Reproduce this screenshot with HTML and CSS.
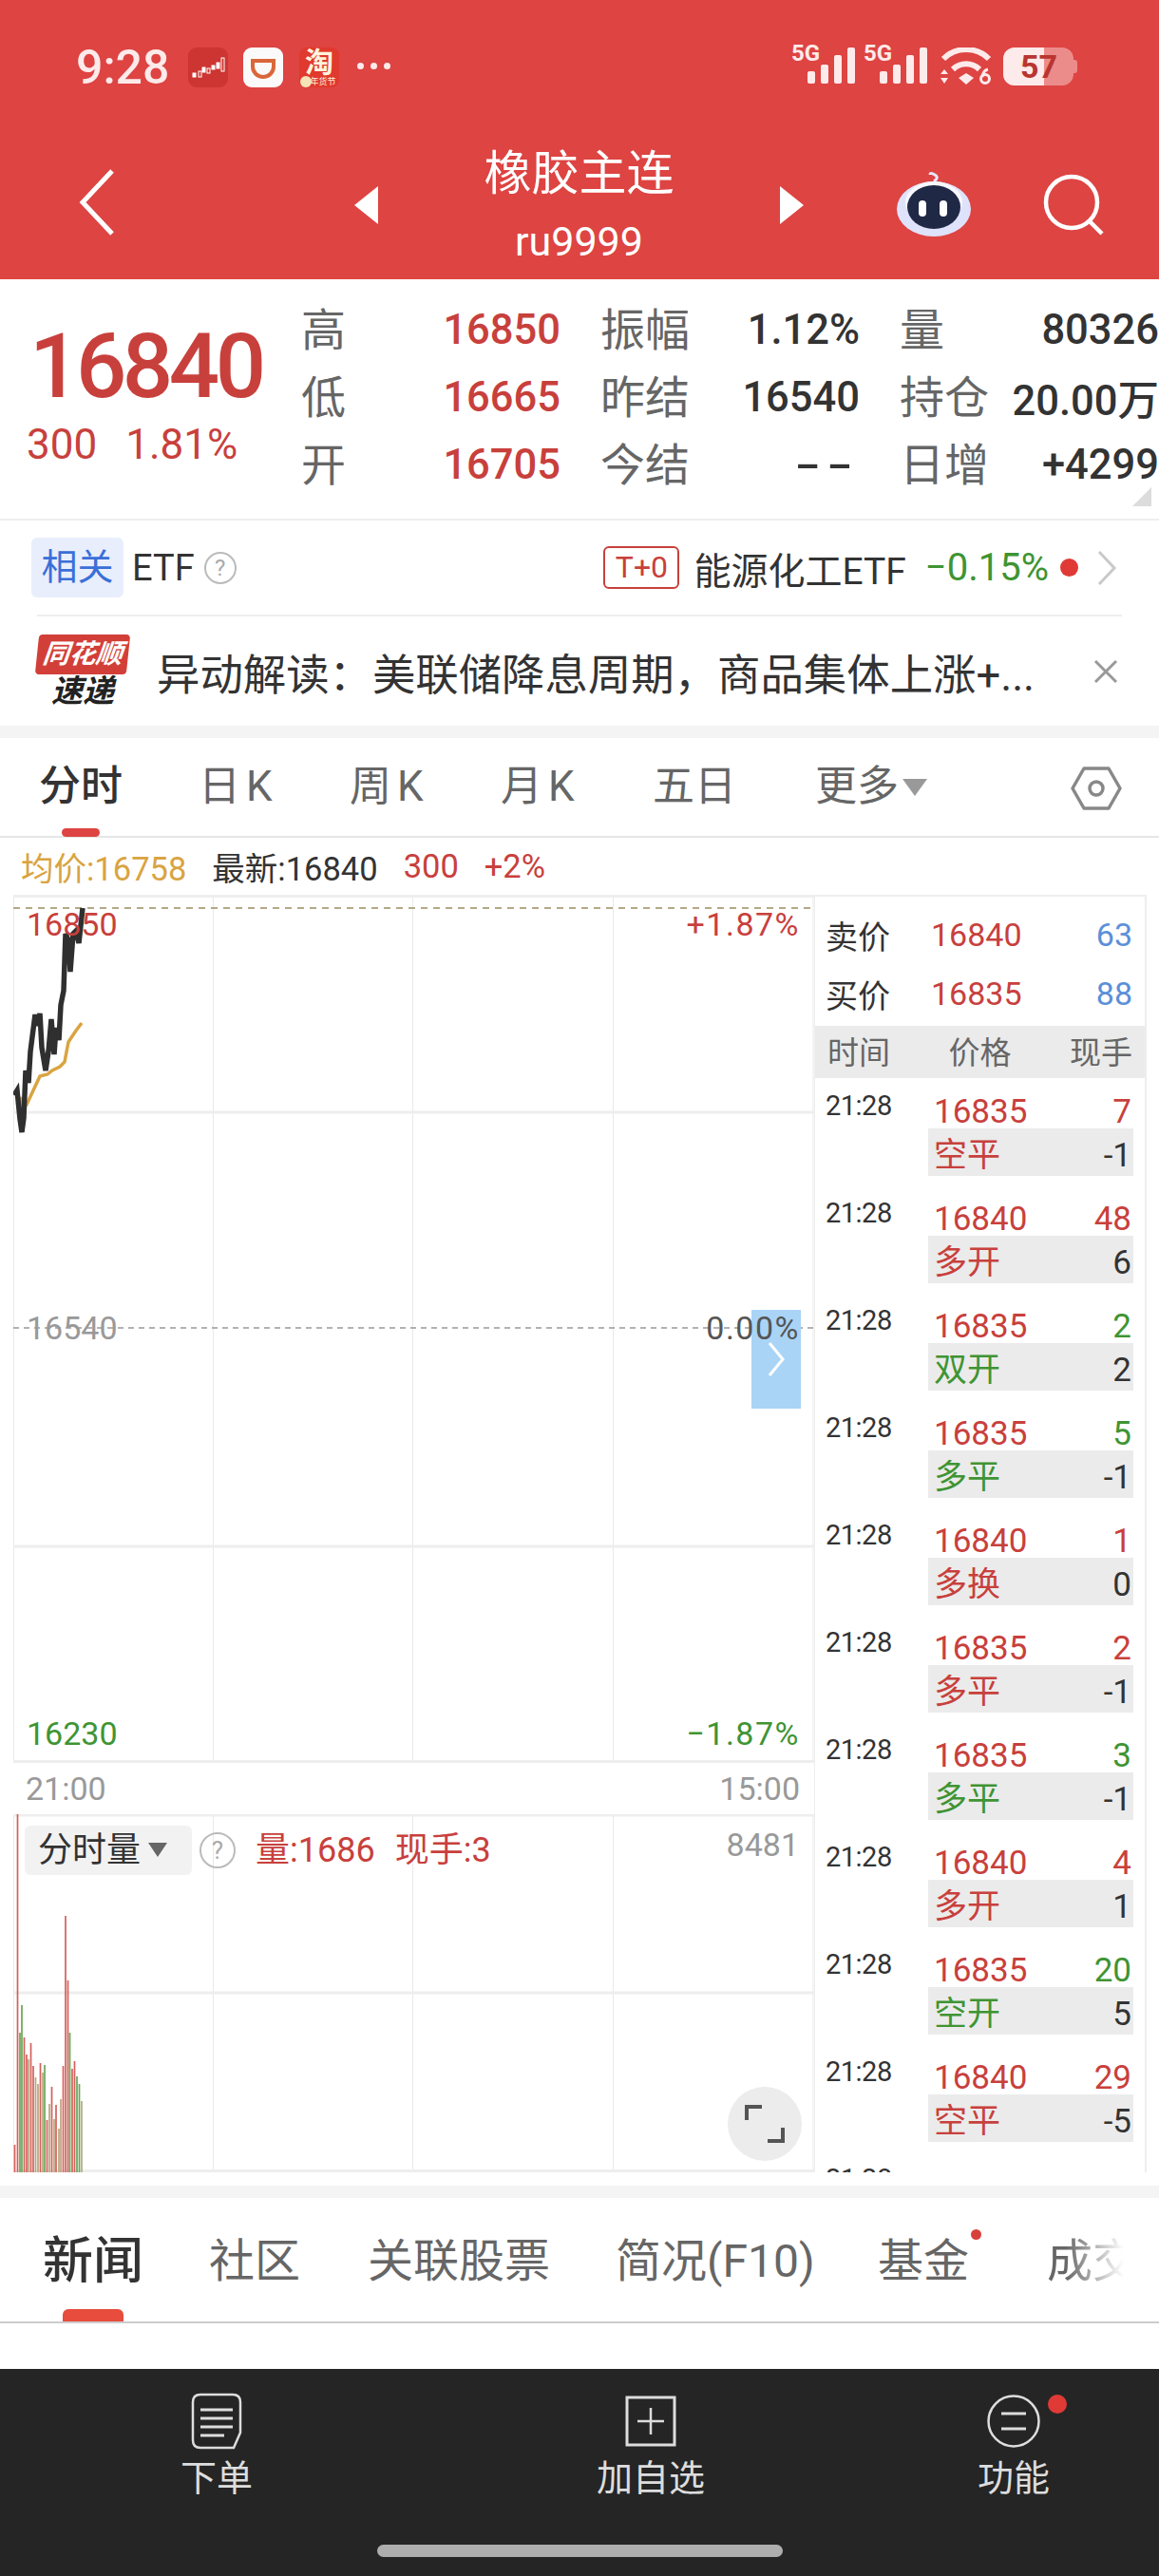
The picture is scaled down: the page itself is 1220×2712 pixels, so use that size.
FILE: index.html
```html
<!DOCTYPE html>
<html lang="zh-CN">
<head>
    <meta charset="UTF-8" />
    <meta name="viewport" content="width=device-width, initial-scale=1.0" />
    <title>橡胶主连</title>
    <link rel="stylesheet" href="styles.css">
</head>
<body>

<header class="top">
    <div class="status">
        <span class="clock">9:28</span>
        <svg class="app-icon" viewBox="0 0 42 42">
            <rect width="42" height="42" rx="9" fill="#cc3531"/>
            <g fill="#fff" stroke="#fff" stroke-width="1">
                <rect x="5" y="27" width="3" height="4"/><rect x="11" y="25" width="3" height="6" fill="none"/>
                <rect x="15" y="21" width="3" height="5"/><rect x="20" y="22" width="3" height="5" fill="none"/>
                <rect x="25" y="19" width="3" height="4"/><rect x="30" y="16" width="3" height="6"/>
                <rect x="35" y="11" width="3" height="14" fill="none"/>
            </g>
        </svg>
        <svg class="app-icon didi" viewBox="0 0 42 42">
            <rect width="42" height="42" rx="9" fill="#fbfafa"/>
            <path d="M10 14h22v6a11 11 0 0 1-22 0z" fill="none" stroke="#d9673a" stroke-width="4"/>
        </svg>
        <span class="taobao"><b>淘</b><i>年货节</i></span>
        <span class="more-dots"><i></i><i></i><i></i></span>
        <span class="sys-icons">
            <span class="signal"><b>5G</b>
                <svg viewBox="0 0 50 38" width="50" height="38"><g fill="#fdeaea"><rect x="0" y="25" width="8" height="13" rx="2"/><rect x="14" y="18" width="8" height="20" rx="2"/><rect x="28" y="8" width="8" height="30" rx="2"/><rect x="42" y="0" width="8" height="38" rx="2"/></g></svg>
            </span>
            <span class="signal"><b>5G</b>
                <svg viewBox="0 0 50 38" width="50" height="38"><g fill="#fdeaea"><rect x="0" y="25" width="8" height="13" rx="2"/><rect x="14" y="18" width="8" height="20" rx="2"/><rect x="28" y="8" width="8" height="30" rx="2"/><rect x="42" y="0" width="8" height="38" rx="2"/></g></svg>
            </span>
            <svg class="wifi" viewBox="0 0 54 40" width="54" height="40">
                <path d="M3 12a34 34 0 0 1 48 0" fill="none" stroke="#fdeaea" stroke-width="6"/>
                <path d="M13 23a20 20 0 0 1 28 0" fill="none" stroke="#fdeaea" stroke-width="6"/>
                <path d="M19 32l8-5 8 5-8 7z" fill="#fdeaea"/>
                <path d="M0 28l4-5 4 5zM0 32h8l-4 6z" fill="#fdeaea"/>
                <circle cx="47" cy="33" r="4.5" fill="none" stroke="#fdeaea" stroke-width="3"/>
                <path d="M44 31q1-7 6-8" fill="none" stroke="#fdeaea" stroke-width="3"/>
            </svg>
            <span class="battery"><span class="battery-fill"></span><b>57</b></span>
        </span>
    </div>
    <div class="nav">
        <svg class="back" viewBox="0 0 40 70" width="40" height="70"><path d="M36 2L5 35l31 33" fill="none" stroke="#fff" stroke-width="5"/></svg>
        <div class="title-row">
            <span class="tri tri-left"></span>
            <div class="title"><h1>橡胶主连</h1><p>ru9999</p></div>
            <span class="tri tri-right"></span>
        </div>
        <svg class="robot" viewBox="0 0 78 72" width="78" height="72">
            <path d="M39 14q6-4 1-7t-5 0" fill="none" stroke="#e8e6ff" stroke-width="3"/>
            <ellipse cx="39" cy="43" rx="39" ry="29" fill="#dfe2fb"/>
            <ellipse cx="39" cy="36" rx="30" ry="22" fill="#f7f7ff"/>
            <ellipse cx="39" cy="41" rx="28" ry="23" fill="#1f2844"/>
            <rect x="23" y="34" width="8" height="17" rx="4" fill="#fff"/>
            <rect x="45" y="34" width="8" height="17" rx="4" fill="#fff"/>
        </svg>
        <svg class="search" viewBox="0 0 66 66" width="66" height="66"><circle cx="31" cy="30" r="27" fill="none" stroke="#fff" stroke-width="4.5"/><path d="M50 50l13 13" stroke="#fff" stroke-width="4.5"/></svg>
    </div>
</header>

<section class="quote">
    <div class="price">
        <div class="last">16840</div>
        <div class="change"><span>300</span><span>1.81%</span></div>
    </div>
    <div class="stats">
        <div class="stat"><label>高</label><span class="up">16850</span></div>
        <div class="stat"><label>振幅</label><span>1.12%</span></div>
        <div class="stat"><label>量</label><span>80326</span></div>
        <div class="stat"><label>低</label><span class="up">16665</span></div>
        <div class="stat"><label>昨结</label><span>16540</span></div>
        <div class="stat"><label>持仓</label><span>20.00万</span></div>
        <div class="stat"><label>开</label><span class="up">16705</span></div>
        <div class="stat"><label>今结</label><span class="dash">--</span></div>
        <div class="stat"><label>日增</label><span>+4299</span></div>
    </div>
    <span class="corner"></span>
</section>

<section class="etf">
    <span class="chip">相关</span>
    <span class="etf-name">ETF</span>
    <span class="help">?</span>
    <span class="etf-right">
        <span class="tplus">T+0</span>
        <span class="etf-fund">能源化工ETF</span>
        <span class="etf-pct">−0.15%</span>
        <span class="red-dot"></span>
        <svg viewBox="0 0 22 38" width="22" height="38"><path d="M3 2l16 17L3 36" fill="none" stroke="#c9c9c9" stroke-width="3"/></svg>
    </span>
</section>

<section class="news">
    <div class="news-logo"><span class="news-logo-top">同花顺</span><span class="news-logo-bottom">速递</span></div>
    <p>异动解读：美联储降息周期，商品集体上涨+...</p>
    <svg viewBox="0 0 26 26" width="26" height="26"><path d="M2 2l22 22M24 2L2 24" stroke="#999" stroke-width="3"/></svg>
</section>

<nav class="periods">
    <a class="active">分时</a>
    <a class="wide">日K</a>
    <a class="wide">周K</a>
    <a class="wide">月K</a>
    <a>五日</a>
    <a class="more">更多<i></i></a>
    <svg class="hex" viewBox="0 0 54 48" width="54" height="48"><path d="M14 3h26l12 21-12 21H14L2 24z" fill="none" stroke="#888" stroke-width="3.5" stroke-linejoin="round"/><circle cx="27" cy="24" r="7" fill="none" stroke="#888" stroke-width="3.5"/></svg>
</nav>

<div class="legend">
    <span class="avg">均价:16758</span>
    <span>最新:16840</span>
    <span class="up">300</span>
    <span class="up">+2%</span>
</div>

<section class="board">
    <div class="charts">
        <div class="plot price-plot">
            <svg viewBox="14 942 843 914" width="843" height="914">
                <g stroke="#e9e9e9" stroke-width="1" fill="none">
                    <path d="M14.5 942V1856M224.5 942V1856M434.5 942V1856M645.5 942V1856M856 942V1856"/>
                </g>
                <g stroke="#eee" stroke-width="3" fill="none">
                    <path d="M14 943.5H857M14 1171H857M14 1628H857M14 1854.5H857"/>
                </g>
                <path d="M14 956H857" stroke="#b5a888" stroke-width="2" stroke-dasharray="7 6"/>
                <path d="M14 1398H857" stroke="#999" stroke-width="1.5" stroke-dasharray="6 5"/>
                <path d="M21 1155L24 1167L28 1163L42 1133L50 1131L55 1127L63 1123L68 1118L72 1097L80 1085L86 1077" fill="none" stroke="#d9a441" stroke-width="3.5"/>
                <path d="M15 1153L18 1148L21 1178L23 1192L25 1177L27 1127L30 1140L32 1107L37 1068L39 1080L42 1067L44 1103L48 1127L51 1107L54 1073L57 1110L59 1082L62 1095L64 1058L67 1043L69 983L72 990L74 1023L77 983L80 980L83 993L87 956" fill="none" stroke="#2f2f2f" stroke-width="5.5"/>
            </svg>
            <span class="expand"><svg viewBox="0 0 20 40" width="20" height="40"><path d="M3 3l14 17L3 37" fill="none" stroke="#fff" stroke-width="3"/></svg></span>
            <span class="mark left top-mark up">16850</span>
            <span class="mark right top-mark up">+1.87%</span>
            <span class="mark left mid-mark grey">16540</span>
            <span class="mark right mid-mark zero">0.00%</span>
            <span class="mark left low-mark down">16230</span>
            <span class="mark right low-mark down">−1.87%</span>
        </div>
        <div class="axis"><span>21:00</span><span>15:00</span></div>
        <div class="plot vol-plot">
            <svg viewBox="14 1910 843 377" width="843" height="377">
                <path d="M14.5 1910V2287M224.5 1910V2287M434.5 1910V2287M645.5 1910V2287M856 1910V2287" stroke="#e9e9e9" stroke-width="1" fill="none"/>
                <path d="M14 1911H857M14 2098H857M14 2285.5H857" stroke="#eee" stroke-width="3" fill="none"/>
                <g stroke-width="1.7" fill="none">
                    <path stroke="#d5605c" d="M15.5 2258V2287M18.5 1910V2287M25.5 2145V2287M28 2163V2287M32.5 2151V2287M35 2175V2287M42.5 2172V2287M49.5 2232V2287M54.5 2197V2287M59 2216V2287M66.5 2175V2287M69 2017V2287M71.5 2085V2287M76 2178V2287M78.5 2170V2287"/>
                    <path stroke="#69a657" d="M21 2140V2287M23 2111V2287M47 2174V2287M73.5 2140V2287M81 2186V2287M83.5 2194V2287"/>
                    <path stroke="#b9a67e" d="M30 2168V2287M37.5 2187V2287M40 2194V2287M45 2182V2287M52 2215V2287M57 2231V2287M62 2241V2287M64 2210V2287M86 2212V2287"/>
                </g>
            </svg>
            <div class="vol-head">
                <span class="vol-chip">分时量<i></i></span>
                <span class="help vol-help">?</span>
                <span class="up">量:1686</span>
                <span class="up">现手:3</span>
            </div>
            <span class="vol-max">8481</span>
            <span class="fullscreen"><svg viewBox="0 0 42 42" width="42" height="42"><path d="M2 17V3h16M40 25v14H24" fill="none" stroke="#555" stroke-width="4"/></svg></span>
        </div>
    </div>

    <aside class="ticks">
        <div class="book"><label>卖价</label><span class="up">16840</span><em>63</em></div>
        <div class="book"><label>买价</label><span class="up">16835</span><em>88</em></div>
        <div class="tick-head"><span>时间</span><span>价格</span><span>现手</span></div>

        <div class="tick"><time>21:28</time><div><p class="up"><span>16835</span><span>7</span></p><p class="sub"><span class="up">空平</span><span>-1</span></p></div></div>
        <div class="tick"><time>21:28</time><div><p class="up"><span>16840</span><span>48</span></p><p class="sub"><span class="up">多开</span><span>6</span></p></div></div>
        <div class="tick"><time>21:28</time><div><p class="up"><span>16835</span><span class="down">2</span></p><p class="sub"><span class="down">双开</span><span>2</span></p></div></div>
        <div class="tick"><time>21:28</time><div><p class="up"><span>16835</span><span class="down">5</span></p><p class="sub"><span class="down">多平</span><span>-1</span></p></div></div>
        <div class="tick"><time>21:28</time><div><p class="up"><span>16840</span><span>1</span></p><p class="sub"><span class="up">多换</span><span>0</span></p></div></div>
        <div class="tick"><time>21:28</time><div><p class="up"><span>16835</span><span>2</span></p><p class="sub"><span class="up">多平</span><span>-1</span></p></div></div>
        <div class="tick"><time>21:28</time><div><p class="up"><span>16835</span><span class="down">3</span></p><p class="sub"><span class="down">多平</span><span>-1</span></p></div></div>
        <div class="tick"><time>21:28</time><div><p class="up"><span>16840</span><span>4</span></p><p class="sub"><span class="up">多开</span><span>1</span></p></div></div>
        <div class="tick"><time>21:28</time><div><p class="up"><span>16835</span><span class="down">20</span></p><p class="sub"><span class="down">空开</span><span>5</span></p></div></div>
        <div class="tick"><time>21:28</time><div><p class="up"><span>16840</span><span>29</span></p><p class="sub"><span class="up">空平</span><span>-5</span></p></div></div>
        <div class="tick"><time>21:28</time><div><p class="up"><span>16840</span><span>7</span></p><p class="sub"><span class="up">多开</span><span>1</span></p></div></div>
    </aside>
</section>

<div class="band"></div>

<nav class="subtabs">
    <a class="active">新闻</a>
    <a>社区</a>
    <a>关联股票</a>
    <a>简况(F10)</a>
    <a class="dotted">基金</a>
    <a class="fade">成交明细</a>
</nav>

<div class="spacer"></div>

<footer class="bottom">
    <div class="actions">
        <a>
            <svg viewBox="0 0 54 60" width="54" height="60"><path d="M10 2h34q8 0 8 8v32l-7 16H10q-8 0-8-8V10q0-8 8-8z" fill="none" stroke="#ddd" stroke-width="2.5"/><path d="M10 18h34M10 27h34M10 36h34M10 45h25" stroke="#ddd" stroke-width="3"/></svg>
            下单
        </a>
        <a>
            <svg viewBox="0 0 54 54" width="54" height="54"><path d="M2 2h50v50H2z" fill="none" stroke="#ddd" stroke-width="3"/><path d="M27 13v28M13 27h28" stroke="#ddd" stroke-width="2.5"/></svg>
            加自选
        </a>
        <a class="func">
            <svg viewBox="0 0 56 56" width="56" height="56"><circle cx="28" cy="28" r="26.5" fill="none" stroke="#ddd" stroke-width="2.5"/><path d="M15 20h26M15 36h26" stroke="#ddd" stroke-width="3"/></svg>
            功能
            <span class="func-dot"></span>
        </a>
    </div>
    <div class="home-bar"></div>
</footer>

</body>
</html>
```

FILE: styles.css
```css
* {
    box-sizing: border-box;
}

body {
    margin: 0;
    width: 1220px;
    height: 2712px;
    overflow: hidden;
    background: white;
    color: #333;
    font-family: Roboto, "Noto Sans CJK SC", sans-serif;
}

h1, p {
    margin: 0;
    font-weight: normal;
}

label {
    color: #666;
}

.up {
    color: #c8403c;
}

.down {
    color: #3f9433;
}

.grey {
    color: #999;
}

/* header */
.top {
    height: 294px;
    background: #dd4442;
    color: white;
}

.status {
    height: 140px;
    padding: 50px 0 0 80px;
    display: flex;
    align-items: flex-start;
}

.clock {
    width: 118px;
    font-size: 50px;
    font-weight: 500;
    line-height: 42px;
    color: #fdeaea;
}

.app-icon {
    width: 42px;
    height: 42px;
}

.didi {
    margin-left: 16px;
}

.taobao {
    position: relative;
    width: 42px;
    height: 42px;
    margin-left: 17px;
    border-radius: 8px;
    background: #e0392e;
    text-align: center;
}

.taobao::after {
    content: "";
    position: absolute;
    left: 1px;
    bottom: 0;
    width: 12px;
    height: 12px;
    border-radius: 50%;
    background: #f6e3b8;
}

.taobao b {
    display: block;
    font-size: 30px;
    line-height: 31px;
    color: #fff3dc;
}

.taobao i {
    display: block;
    padding-left: 8px;
    font-size: 9px;
    font-style: normal;
    line-height: 11px;
    color: #fff3dc;
}

.more-dots {
    display: flex;
    gap: 7px;
    margin: 16px 0 0 19px;
}

.more-dots i {
    width: 7px;
    height: 7px;
    border-radius: 50%;
    background: #fdeaea;
}

.sys-icons {
    display: flex;
    align-items: flex-start;
    margin-left: 422px;
}

.signal {
    display: flex;
    width: 76px;
    height: 40px;
}

.signal b {
    width: 17px;
    margin-top: -6px;
    font-size: 24px;
    line-height: 24px;
    color: #fdeaea;
    white-space: nowrap;
}

.wifi {
    margin-left: 5px;
}

.battery {
    position: relative;
    width: 74px;
    height: 40px;
    margin-left: 12px;
    border-radius: 12px;
    background: #ec8c8a;
}

.battery::after {
    content: "";
    position: absolute;
    left: 74px;
    top: 13px;
    width: 4px;
    height: 14px;
    background: #ec8c8a;
    border-radius: 0 3px 3px 0;
}

.battery-fill {
    position: absolute;
    left: 0;
    top: 0;
    width: 43px;
    height: 40px;
    border-radius: 12px 0 0 12px;
    background: #fdeaea;
}

.battery b {
    position: absolute;
    left: 18px;
    top: 0;
    font-size: 34px;
    line-height: 40px;
    color: #b9352f;
}

.nav {
    height: 154px;
    position: relative;
    display: flex;
    padding: 38px 0 0 82px;
}

.title-row {
    display: flex;
    align-items: center;
    justify-content: space-between;
    width: 473px;
    height: 132px;
    margin: -28px 0 0 251px;
    position: absolute;
    left: 122px;
}

.tri {
    width: 0;
    height: 0;
    border-top: 20px solid transparent;
    border-bottom: 20px solid transparent;
}

.tri-left {
    border-right: 25px solid white;
}

.tri-right {
    border-left: 25px solid white;
}

.title {
    text-align: center;
}

.title h1 {
    padding-top: 3px;
    font-size: 50px;
    line-height: 66px;
}

.title p {
    margin-top: 7px;
    font-size: 43px;
    line-height: 62px;
}

.robot {
    position: absolute;
    left: 944px;
    top: 37px;
}

.search {
    position: absolute;
    left: 1097px;
    top: 43px;
}

/* quote */
.quote {
    position: relative;
    height: 254px;
    display: flex;
    border-bottom: 2px solid #eeeeee;
}

.price {
    width: 317px;
    padding: 47px 0 0 31px;
    color: #c8403c;
}

.last {
    font-size: 94px;
    font-weight: 500;
    line-height: 90px;
    letter-spacing: -4.5px;
}

.change {
    display: flex;
    gap: 30px;
    margin: 14px 0 0 -3px;
    font-size: 44px;
    line-height: 46px;
}

.stats {
    width: 903px;
    padding-top: 18px;
    display: grid;
    grid-template-columns: 273px 273px 273px;
    column-gap: 42px;
    grid-auto-rows: 71px;
}

.stat {
    display: flex;
    justify-content: space-between;
    align-items: center;
    font-size: 47px;
    white-space: nowrap;
}

.stat label {
    margin-bottom: 8px;
}

.stat span {
    font-size: 43.5px;
    font-weight: 500;
}

.stat .dash {
    letter-spacing: 4px;
    transform: scaleX(1.8);
    transform-origin: right center;
}

.corner {
    position: absolute;
    right: 8px;
    top: 219px;
    border-left: 20px solid transparent;
    border-bottom: 20px solid #dcdcdc;
}

/* etf row */
.etf {
    height: 99px;
    display: flex;
    align-items: center;
    padding: 0 0 0 33px;
}

.chip {
    width: 97px;
    height: 63px;
    border-radius: 6px;
    background: #e8eefc;
    color: #3b6fd8;
    font-size: 38px;
    line-height: 63px;
    text-align: center;
}

.etf-name {
    margin-left: 9px;
    font-size: 38px;
}

.help {
    display: inline-block;
    width: 34px;
    height: 34px;
    margin-left: 10px;
    border: 2px solid #bbb;
    border-radius: 50%;
    color: #aaa;
    font-size: 24px;
    line-height: 30px;
    text-align: center;
}

.etf-right {
    margin-left: auto;
    padding-right: 44px;
    display: flex;
    align-items: center;
}

.tplus {
    width: 80px;
    height: 45px;
    border: 2px solid #c8403c;
    border-radius: 6px;
    color: #c8403c;
    font-size: 32px;
    line-height: 41px;
    text-align: center;
}

.etf-fund {
    margin-left: 15px;
    font-size: 39px;
}

.etf-pct {
    margin-left: 20px;
    color: #3f9433;
    font-size: 40px;
}

.red-dot {
    width: 19px;
    height: 19px;
    margin: 0 19px 0 12px;
    border-radius: 50%;
    background: #e03a36;
}

/* news */
.news {
    height: 117px;
    margin: 0 39px;
    border-top: 2px solid #eeeeee;
    display: flex;
    align-items: center;
}

.news-logo {
    width: 96px;
    height: 78px;
    text-align: center;
    font-style: italic;
    font-weight: bold;
}

.news-logo-top {
    display: block;
    height: 42px;
    border-radius: 4px;
    background: #d23f38;
    color: white;
    font-size: 28px;
    line-height: 42px;
    transform: skewX(-6deg);
}

.news-logo-bottom {
    display: block;
    font-size: 33px;
    line-height: 36px;
    color: #222;
}

.news p {
    margin-left: 30px;
    width: 955px;
    font-size: 45.4px;
    white-space: nowrap;
}

.news svg {
    margin-left: 31px;
}

/* period tabs */
.periods {
    height: 118px;
    border-top: 13px solid #f4f4f4;
    border-bottom: 2px solid #e6e6e6;
    position: relative;
    font-size: 44px;
    color: #666;
}

.periods a {
    position: absolute;
    top: 26px;
    line-height: 50px;
}

.periods a:nth-child(1) { left: 41px; color: #333; font-weight: 500; }
.periods a:nth-child(2) { left: 209px; }
.periods a:nth-child(3) { left: 368px; }
.periods a:nth-child(4) { left: 527px; }
.periods a:nth-child(5) { left: 687px; }
.periods a:nth-child(6) { left: 858px; }

.periods .wide {
    letter-spacing: 6px;
}

.periods .active::after {
    content: "";
    position: absolute;
    left: 24px;
    top: 69px;
    width: 40px;
    height: 9px;
    border-radius: 5px;
    background: #dd4442;
}

.more i {
    display: inline-block;
    margin-left: 4px;
    vertical-align: 5px;
    border-top: 18px solid #999;
    border-left: 13px solid transparent;
    border-right: 13px solid transparent;
}

.hex {
    position: absolute;
    left: 1127px;
    top: 29px;
}

/* legend */
.legend {
    height: 60px;
    padding-left: 22px;
    display: flex;
    align-items: center;
    gap: 27px;
    font-size: 34.5px;
}

.avg {
    color: #d9a441;
}

/* board */
.board {
    height: 1345px;
    padding-left: 14px;
    display: flex;
}

.charts {
    width: 843px;
}

.plot {
    position: relative;
}

.plot > svg {
    display: block;
}

.price-plot {
    height: 914px;
}

.mark {
    position: absolute;
    font-size: 34px;
    line-height: 40px;
}

.mark.left {
    left: 14px;
}

.mark.right {
    right: 15px;
    letter-spacing: 1.5px;
}

.top-mark {
    top: 11px;
}

.mid-mark {
    top: 436px;
}

.low-mark {
    top: 863px;
}

.zero {
    color: #555;
}

.expand {
    position: absolute;
    left: 777px;
    top: 437px;
    width: 52px;
    height: 104px;
    background: #a9d4f6;
    display: flex;
    align-items: center;
    justify-content: center;
}

.axis {
    height: 54px;
    padding: 0 15px 0 13px;
    display: flex;
    align-items: center;
    justify-content: space-between;
    font-size: 34px;
    color: #999;
}

.vol-plot {
    height: 377px;
}

.vol-head {
    position: absolute;
    left: 12px;
    top: 12px;
    display: flex;
    align-items: center;
    font-size: 36px;
    line-height: 52px;
}

.vol-chip {
    width: 176px;
    height: 52px;
    padding-left: 14px;
    border-radius: 6px;
    background: #f2f2f2;
}

.vol-chip i {
    display: inline-block;
    margin-left: 8px;
    vertical-align: 5px;
    border-top: 15px solid #666;
    border-left: 10px solid transparent;
    border-right: 10px solid transparent;
}

.vol-help {
    width: 38px;
    height: 38px;
    margin: 0 0 0 8px;
    line-height: 34px;
    font-size: 26px;
}

.vol-head .up {
    margin-left: 21px;
}

.vol-max {
    position: absolute;
    right: 16px;
    top: 12px;
    font-size: 34px;
    line-height: 40px;
    color: #999;
}

.fullscreen {
    position: absolute;
    left: 752px;
    top: 287px;
    width: 78px;
    height: 78px;
    border-radius: 50%;
    background: #ececec;
    display: flex;
    align-items: center;
    justify-content: center;
}

/* tick list */
.ticks {
    width: 350px;
    height: 1345px;
    padding-top: 12px;
    overflow: hidden;
    border: 2px solid #eeeeee;
    border-left-width: 1px;
    border-bottom-width: 0;
}

.book {
    height: 62px;
    padding: 0 13px 6px 11px;
    display: grid;
    grid-template-columns: 111px 1fr auto;
    align-items: center;
    font-size: 34px;
}

.book label {
    color: #333;
}

.book em {
    font-style: normal;
    color: #5b8fd8;
}

.tick-head {
    height: 55px;
    padding: 0 13px 4px;
    display: flex;
    justify-content: space-between;
    align-items: center;
    background: #ebebeb;
    font-size: 33px;
    color: #666;
}

.tick {
    height: 113px;
    display: flex;
    padding: 11px 12px 0 11px;
    font-size: 35px;
}

.tick time {
    width: 108px;
    font-size: 29px;
    line-height: 36px;
    letter-spacing: -0.5px;
}

.tick div {
    width: 216px;
}

.tick p {
    height: 42px;
    display: flex;
    justify-content: space-between;
    padding: 4px 2px 0 6px;
    line-height: 42px;
}

.tick p.sub {
    height: 50px;
    padding-top: 8px;
    background: #ebebeb;
    color: #333;
}

.band {
    height: 13px;
    margin-top: 14px;
    background: #f4f4f4;
}

/* lower tabs */
.subtabs {
    position: relative;
    height: 132px;
    border-bottom: 2px solid #cccccc;
    overflow: hidden;
    font-size: 48px;
    color: #666;
}

.subtabs a {
    position: absolute;
    top: 34px;
    line-height: 66px;
    white-space: nowrap;
}

.subtabs a:nth-child(1) { left: 45px; font-size: 53px; font-weight: 500; color: #333; }
.subtabs a:nth-child(2) { left: 220px; }
.subtabs a:nth-child(3) { left: 387px; }
.subtabs a:nth-child(4) { left: 648px; }
.subtabs a:nth-child(5) { left: 924px; }
.subtabs a:nth-child(6) { left: 1102px; }

.subtabs .active::after {
    content: "";
    position: absolute;
    left: 21px;
    top: 83px;
    width: 64px;
    height: 13px;
    border-radius: 6px 6px 0 0;
    background: #e74c3c;
}

.subtabs .dotted::after {
    content: "";
    position: absolute;
    left: 98px;
    top: -1px;
    width: 11px;
    height: 11px;
    border-radius: 50%;
    background: #d8403c;
}

.subtabs .fade {
    -webkit-mask-image: linear-gradient(to right, black 10%, transparent 42%);
    mask-image: linear-gradient(to right, black 10%, transparent 42%);
}

.spacer {
    height: 48px;
}

/* footer */
.bottom {
    height: 220px;
    background: #252525;
    color: #ddd;
}

.actions {
    height: 185px;
    display: grid;
    grid-template-columns: 456px 458px 306px;
    padding-top: 25px;
}

.actions a {
    position: relative;
    display: flex;
    flex-direction: column;
    align-items: center;
    height: 130px;
    font-size: 38px;
    line-height: 60px;
}

.actions svg {
    height: 60px;
    flex: none;
}

.func-dot {
    position: absolute;
    left: 189px;
    top: 2px;
    width: 20px;
    height: 20px;
    border-radius: 50%;
    background: #e03a36;
}

.home-bar {
    width: 427px;
    height: 13px;
    margin: 0 auto;
    border-radius: 7px;
    background: #aeaeae;
}
```
